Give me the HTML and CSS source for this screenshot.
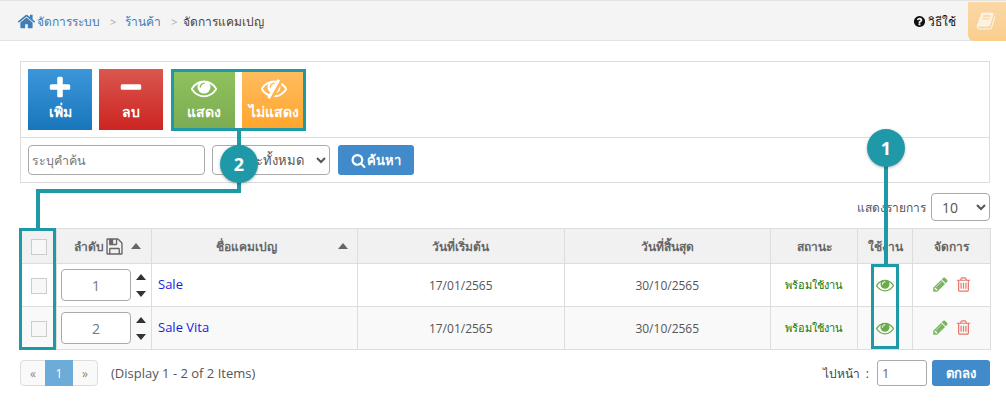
FILE: index.html
```html
<!DOCTYPE html>
<html lang="th">
<head>
    <meta charset="UTF-8">
    <title>จัดการแคมเปญ</title>
    <link rel="stylesheet" href="styles.css">
</head>
<body>
    <svg class="icon-defs" width="0" height="0">
        <symbol id="i-home" viewBox="0 0 1792 1792"><path d="M1472 992v480q0 26-19 45t-45 19h-384v-384h-256v384h-384q-26 0-45-19t-19-45v-480q0-1 .5-3t.5-3l575-474 575 474q1 2 1 6zm223-69l-62 74q-8 9-21 11h-3q-13 0-21-7l-692-577-692 577q-12 8-24 7-13-2-21-11l-62-74q-8-10-7-23.5t11-21.5l719-599q32-26 76-26t76 26l244 204v-195q0-14 9-23t23-9h192q14 0 23 9t9 23v408l219 182q10 8 11 21.5t-7 23.5z"/></symbol>
        <symbol id="i-plus" viewBox="0 0 1792 1792"><path d="M1600 736v192q0 40-28 68t-68 28h-416v416q0 40-28 68t-68 28h-192q-40 0-68-28t-28-68v-416h-416q-40 0-68-28t-28-68v-192q0-40 28-68t68-28h416v-416q0-40 28-68t68-28h192q40 0 68 28t28 68v416h416q40 0 68 28t28 68z"/></symbol>
        <symbol id="i-minus" viewBox="0 0 1792 1792"><path d="M1600 736v192q0 40-28 68t-68 28h-1216q-40 0-68-28t-28-68v-192q0-40 28-68t68-28h1216q40 0 68 28t28 68z"/></symbol>
        <symbol id="i-eye" viewBox="0 0 1792 1792"><path d="M1664 960q-152-236-381-353 61 104 61 225 0 185-131.5 316.5t-316.5 131.5-316.5-131.5-131.5-316.5q0-121 61-225-229 117-381 353 133 205 333.5 326.5t434.5 121.5 434.5-121.5 333.5-326.5zm-720-384q0-20-14-34t-34-14q-125 0-214.5 89.5t-89.5 214.5q0 20 14 34t34 14 34-14 14-34q0-86 61-147t147-61q20 0 34-14t14-34zm848 384q0 34-20 69-140 230-376.5 368.5t-499.5 138.5-499.5-139-376.5-368q-20-35-20-69t20-69q140-229 376.5-368t499.5-139 499.5 139 376.5 368q20 35 20 69z"/></symbol>
        <symbol id="i-eye-slash" viewBox="0 0 1792 1792"><path d="M555 1335l78-141q-87-63-136-159t-49-203q0-121 61-225-229 117-381 353 167 258 427 375zm389-759q0-20-14-34t-34-14q-125 0-214.5 89.5t-89.5 214.5q0 20 14 34t34 14 34-14 14-34q0-86 61-147t147-61q20 0 34-14t14-34zm363-191q0 7-1 9-106 189-316 567t-315 566l-49 89q-10 16-28 16-12 0-134-70-16-10-16-28 0-12 44-87-143-65-263.5-173t-208.5-245q-20-31-20-69t20-69q153-235 380-371t496-136q89 0 180 17l54-97q10-16 28-16 5 0 18 6t31 15.5 33 18.5 31.5 18.5 19.5 11.5q16 10 16 27zm37 447q0 139-79 253.5t-209 164.5l280-502q8 45 8 84zm448 128q0 35-20 69-39 64-109 145-150 172-347.5 267t-419.5 95l74-132q212-18 392.5-137t301.5-307q-115-179-282-294l63-112q95 64 182.5 153t144.5 184q20 34 20 69z"/></symbol>
        <symbol id="i-search" viewBox="0 0 1792 1792"><path d="M1216 832q0-185-131.5-316.5t-316.5-131.5-316.5 131.5-131.5 316.5 131.5 316.5 316.5 131.5 316.5-131.5 131.5-316.5zm512 832q0 52-38 90t-90 38q-54 0-90-38l-343-342q-179 124-399 124-143 0-273.5-55.5t-225-150-150-225-55.5-273.5 55.5-273.5 150-225 225-150 273.5-55.5 273.5 55.5 225 150 150 225 55.5 273.5q0 220-124 399l343 343q37 37 37 90z"/></symbol>
        <symbol id="i-help" viewBox="0 0 1792 1792"><path d="M1024 1376v-192q0-14-9-23t-23-9h-192q-14 0-23 9t-9 23v192q0 14 9 23t23 9h192q14 0 23-9t9-23zm256-672q0-88-55.5-163t-138.5-116-170-41q-243 0-371 213-15 24 8 42l132 100q7 6 19 6 16 0 25-12 53-68 86-92 34-24 86-24 48 0 85.5 26t37.5 59q0 38-20 61t-68 45q-63 28-115.5 86.5t-52.5 125.5v36q0 14 9 23t23 9h192q14 0 23-9t9-23q0-19 21.5-49.5t54.5-49.5q32-18 49-28.5t46-35 44.5-48 28-60.5 12.5-81zm384 192q0 209-103 385.5t-279.5 279.5-385.5 103-385.5-103-279.5-279.5-103-385.5 103-385.5 279.5-279.5 385.5-103 385.5 103 279.5 279.5 103 385.5z"/></symbol>
        <symbol id="i-book" viewBox="0 0 1792 1792"><path d="M1703 478q40 57 18 129l-275 906q-19 64-76.5 107.5t-122.5 43.5h-923q-77 0-148.5-53.5t-99.5-131.5q-24-67-2-127 0-4 3-27t4-37q1-8-3-21.5t-3-19.5q2-11 8-21t16.5-23.5 16.5-23.5q23-38 45-91.5t30-91.5q3-10 .5-30t-.5-28q3-11 17-28t17-23q21-36 42-92t25-90q1-9-2.5-32t.5-28q4-13 22-30.5t22-22.5q19-26 42.5-84.5t27.5-96.5q1-8-3-25.5t-2-26.5q2-8 9-18t18-23 17-21q8-12 16.5-30.5t15-35 16-36 19.5-32 26.5-23.5 36-11.5 47.5 5.5l-1 3q38-9 51-9h761q74 0 114 56t18 130l-274 906q-36 119-71.5 153.5t-128.5 34.5h-869q-27 0-38 15-11 16-1 43 24 70 144 70h923q29 0 56-15.5t35-41.5l300-987q7-22 5-57 38 15 59 43zm-1064 2q-4 13 2 22.5t20 9.5h608q13 0 25.5-9.5t16.5-22.5l21-64q4-13-2-22.5t-20-9.5h-608q-13 0-25.5 9.5t-16.5 22.5zm-83 256q-4 13 2 22.5t20 9.5h608q13 0 25.5-9.5t16.5-22.5l21-64q4-13-2-22.5t-20-9.5h-608q-13 0-25.5 9.5t-16.5 22.5z"/></symbol>
        <symbol id="i-save" viewBox="0 0 1792 1792"><path d="M512 1536h768v-384h-768v384zm896 0h128v-896q0-14-10-38.5t-20-34.5l-281-281q-10-10-34-20t-39-10v416q0 40-28 68t-68 28h-576q-40 0-68-28t-28-68v-416h-128v1280h128v-416q0-40 28-68t68-28h832q40 0 68 28t28 68v416zm-384-928v-320q0-13-9.5-22.5t-22.5-9.5h-192q-13 0-22.5 9.5t-9.5 22.5v320q0 13 9.5 22.5t22.5 9.5h192q13 0 22.5-9.5t9.5-22.5zm640 32v928q0 40-28 68t-68 28h-1344q-40 0-68-28t-28-68v-1344q0-40 28-68t68-28h928q40 0 88 20t76 48l280 280q28 28 48 76t20 88z"/></symbol>
        <symbol id="i-pencil" viewBox="0 0 1792 1792"><path d="M491 1536l91-91-235-235-91 91v107h128v128h107zm523-928q0-22-22-22-10 0-17 7l-542 542q-7 7-7 17 0 22 22 22 10 0 17-7l542-542q7-7 7-17zm-54-192l416 416-832 832h-416v-416zm683 96q0 53-37 90l-166 166-416-416 166-165q36-38 90-38 53 0 91 38l235 234q37 39 37 91z"/></symbol>
        <symbol id="i-trash" viewBox="0 0 1792 1792"><path d="M704 736v576q0 14-9 23t-23 9h-64q-14 0-23-9t-9-23v-576q0-14 9-23t23-9h64q14 0 23 9t9 23zm256 0v576q0 14-9 23t-23 9h-64q-14 0-23-9t-9-23v-576q0-14 9-23t23-9h64q14 0 23 9t9 23zm256 0v576q0 14-9 23t-23 9h-64q-14 0-23-9t-9-23v-576q0-14 9-23t23-9h64q14 0 23 9t9 23zm128 724v-948h-896v948q0 22 7 40.5t14.5 27 10.5 8.5h832q3 0 10.5-8.5t14.5-27 7-40.5zm-672-1076h448l-48-117q-7-9-17-11h-317q-10 2-17 11zm928 32v64q0 14-9 23t-23 9h-96v948q0 83-47 143.5t-113 60.5h-832q-66 0-113-58.5t-47-141.5v-952h-96q-14 0-23-9t-9-23v-64q0-14 9-23t23-9h309l70-167q15-37 54-63t79-26h320q40 0 79 26t54 63l70 167h309q14 0 23 9t9 23z"/></symbol>
    </svg>

    <header class="topbar">
        <nav class="crumbs">
            <svg class="home-icon"><use href="#i-home"/></svg>
            <a href="#">จัดการระบบ</a>
            <span class="crumb-sep">&gt;</span>
            <a href="#">ร้านค้า</a>
            <span class="crumb-sep crumb-sep-last">&gt;</span>
            <span class="crumb-now">จัดการแคมเปญ</span>
        </nav>
        <a class="help" href="#"><svg class="help-icon"><use href="#i-help"/></svg>วิธีใช้</a>
        <div class="book-tab"><svg class="book-icon"><use href="#i-book"/></svg></div>
    </header>

    <main class="content">
        <section class="panel">
            <div class="actions">
                <button class="tile tile-add" type="button"><svg class="tile-icon"><use href="#i-plus"/></svg>เพิ่ม</button>
                <button class="tile tile-del" type="button"><svg class="tile-icon"><use href="#i-minus"/></svg>ลบ</button>
                <button class="tile tile-show" type="button"><svg class="tile-icon"><use href="#i-eye"/></svg>แสดง</button>
                <button class="tile tile-hide" type="button"><svg class="tile-icon"><use href="#i-eye-slash"/></svg>ไม่แสดง</button>
            </div>
            <form class="search">
                <input class="search-input" type="text" placeholder="ระบุคำค้น">
                <select class="search-select"><option>สถานะทั้งหมด</option></select>
                <button class="btn-blue btn-search" type="button"><svg class="search-icon"><use href="#i-search"/></svg>ค้นหา</button>
            </form>
        </section>

        <div class="page-size">
            <span>แสดงรายการ</span>
            <select class="size-select"><option>10</option></select>
        </div>

        <table class="grid">
            <colgroup>
                <col class="c-check"><col class="c-order"><col class="c-name"><col class="c-date"><col class="c-date"><col class="c-status"><col class="c-use"><col class="c-manage">
            </colgroup>
            <thead>
                <tr>
                    <th><span class="check"></span></th>
                    <th><div class="th-order">ลำดับ <svg class="save-icon"><use href="#i-save"/></svg><i class="caret-up"></i></div></th>
                    <th class="th-name">ชื่อแคมเปญ<i class="caret-up"></i></th>
                    <th>วันที่เริ่มต้น</th>
                    <th>วันที่สิ้นสุด</th>
                    <th>สถานะ</th>
                    <th>ใช้งาน</th>
                    <th>จัดการ</th>
                </tr>
            </thead>
            <tbody>
                <tr>
                    <td><span class="check"></span></td>
                    <td><div class="order-cell"><input class="order-input" type="text" value="1"><div class="order-arrows"><i class="arrow-up"></i><i class="arrow-down"></i></div></div></td>
                    <td class="name"><a href="#">Sale</a></td>
                    <td>17/01/2565</td>
                    <td>30/10/2565</td>
                    <td class="ready">พร้อมใช้งาน</td>
                    <td><svg class="eye-icon"><use href="#i-eye"/></svg></td>
                    <td><div class="manage"><svg class="pencil-icon"><use href="#i-pencil"/></svg><svg class="trash-icon"><use href="#i-trash"/></svg></div></td>
                </tr>
                <tr>
                    <td><span class="check"></span></td>
                    <td><div class="order-cell"><input class="order-input" type="text" value="2"><div class="order-arrows"><i class="arrow-up"></i><i class="arrow-down"></i></div></div></td>
                    <td class="name"><a href="#">Sale Vita</a></td>
                    <td>17/01/2565</td>
                    <td>30/10/2565</td>
                    <td class="ready">พร้อมใช้งาน</td>
                    <td><svg class="eye-icon"><use href="#i-eye"/></svg></td>
                    <td><div class="manage"><svg class="pencil-icon"><use href="#i-pencil"/></svg><svg class="trash-icon"><use href="#i-trash"/></svg></div></td>
                </tr>
            </tbody>
        </table>

        <div class="pager-row">
            <div class="pager">
                <a class="pg pg-prev" href="#">«</a>
                <a class="pg pg-now" href="#">1</a>
                <a class="pg pg-next" href="#">»</a>
            </div>
            <span class="pager-info">(Display 1 - 2 of 2 Items)</span>
            <div class="goto">
                <span>ไปหน้า&nbsp; :</span>
                <input class="goto-input" type="text" value="1">
                <button class="btn-blue btn-go" type="button">ตกลง</button>
            </div>
        </div>
    </main>

    <!-- teal annotations drawn over the page -->
    <div class="mark box-tiles"></div>
    <div class="mark box-check"></div>
    <div class="mark box-eye"></div>
    <div class="mark line-a"></div>
    <div class="mark line-b"></div>
    <div class="mark line-c"></div>
    <div class="mark line-d"></div>
    <div class="bubble bubble-1">1</div>
    <div class="bubble bubble-2">2</div>
</body>
</html>
```

FILE: styles.css
```css
* {
    box-sizing: border-box;
}

html, body {
    height: 404px;
    overflow: hidden;
}

body {
    position: relative;
    margin: 0;
    font-family: "Open Sans", "Noto Sans", sans-serif;
    font-size: 12px;
    color: #555;
    background-color: #fff;
}

svg {
    fill: currentColor;
}

.icon-defs {
    position: absolute;
}

/* top bar */
.topbar {
    display: flex;
    align-items: center;
    height: 41px;
    background-color: #f4f4f4;
    border-top: 1px solid #e3e3e3;
    border-bottom: 1px solid #e3e3e3;
}

.crumbs {
    display: flex;
    align-items: center;
    padding-top: 1px;
    padding-left: 17px;
}

.crumbs a {
    color: #3f7fb5;
    text-decoration: none;
}

.home-icon {
    width: 19px;
    height: 19px;
    margin-right: 1px;
    color: #3f7fb5;
}

.crumb-sep {
    margin: 0 9px 0 10px;
    color: #aaa;
    font-size: 11px;
}

.crumb-sep-last {
    margin-right: 5px;
}

.crumb-now {
    color: #444;
}

.help {
    display: flex;
    align-items: center;
    margin-left: auto;
    margin-right: 12px;
    padding-top: 1px;
    color: #111;
    text-decoration: none;
}

.help-icon {
    width: 13px;
    height: 13px;
    margin-right: 2px;
}

.book-tab {
    display: flex;
    align-items: center;
    justify-content: center;
    width: 38px;
    height: 39px;
    padding-right: 2px;
    color: #fdf1e0;
    background-image: linear-gradient(#fbd8a6, #fbcd8d);
    border-bottom-left-radius: 6px;
    margin-bottom: -1px;
}

.book-icon {
    width: 20px;
    height: 20px;
}

.content {
    padding: 20px 16px 0 20px;
}

/* action panel */
.panel {
    height: 122px;
    border: 1px solid #ddd;
}

.actions {
    display: flex;
    height: 76px;
    padding: 7px;
    border-bottom: 1px solid #ddd;
}

.tile {
    display: flex;
    flex-direction: column;
    align-items: center;
    width: 64px;
    height: 61px;
    margin-right: 7px;
    padding: 6px 0 0;
    border: 0;
    font-family: inherit;
    font-size: 14px;
    font-weight: 700;
    color: #fff;
    white-space: nowrap;
}

.tile-icon {
    width: 26px;
    height: 26px;
    margin-bottom: 0;
}

.tile-add {
    background-image: linear-gradient(#3b97d8, #1a76bb);
}

.tile-del {
    background-image: linear-gradient(#d9574f, #cd2421);
    margin-right: 9px;
}

.tile-show {
    width: 63px;
    background-image: linear-gradient(#90c35d, #7bab53);
}

.tile-hide {
    background-image: linear-gradient(#ffbd62, #ffa52c);
}

.search {
    display: flex;
    align-items: center;
    padding: 7px;
}

.search-input {
    width: 177px;
    height: 30px;
    margin-right: 7px;
    padding: 0 3px;
    border: 1px solid #aaa;
    border-radius: 4px;
    font-family: inherit;
    font-size: 12.5px;
}

.search-input::placeholder {
    color: #777;
}

.search-select {
    width: 118px;
    height: 30px;
    margin-right: 8px;
    padding-left: 7px;
    border: 1px solid #aaa;
    border-radius: 4px;
    background-color: #fff;
    font-family: inherit;
    font-size: 13px;
    color: #555;
}

.btn-blue {
    height: 30px;
    border: 0;
    border-radius: 3px;
    background-color: #428bca;
    color: #fff;
    font-family: inherit;
    font-size: 13px;
    font-weight: 700;
}

.btn-search {
    display: flex;
    align-items: center;
    justify-content: center;
    width: 76px;
}

.search-icon {
    width: 15px;
    height: 15px;
    margin-right: 1px;
}

/* page size */
.page-size {
    display: flex;
    align-items: center;
    justify-content: flex-end;
    height: 28px;
    margin-top: 10px;
}

.size-select {
    width: 59px;
    height: 28px;
    margin-left: 5px;
    padding-left: 6px;
    border: 1px solid #aaa;
    border-radius: 4px;
    background-color: #fff;
    font-family: inherit;
    font-size: 14px;
    color: #555;
}

/* table */
.grid {
    width: 970px;
    margin-top: 7px;
    border-collapse: collapse;
    table-layout: fixed;
}

.c-check { width: 36px; }
.c-order { width: 95px; }
.c-name { width: 206px; }
.c-date { width: 206.5px; }
.c-status { width: 87px; }
.c-use { width: 55px; }
.c-manage { width: 78px; }

.grid th,
.grid td {
    padding: 0;
    border: 1px solid #ddd;
    text-align: center;
}

.grid th {
    height: 35px;
    background-color: #f1f1f1;
    font-weight: 700;
    color: #666;
}

.grid td {
    height: 43px;
}

.grid tbody tr:nth-child(even) td {
    background-color: #f9f9f9;
}

.check {
    display: inline-block;
    width: 16px;
    height: 16px;
    vertical-align: middle;
    background-color: #f7f7f7;
    border: 1px solid #ccc;
}

.th-order {
    display: flex;
    align-items: center;
    justify-content: center;
    padding-left: 6px;
}

.save-icon {
    width: 19px;
    height: 19px;
    margin-left: 1px;
    margin-right: 7px;
}

.caret-up {
    display: inline-block;
    width: 0;
    height: 0;
    border-left: 5.5px solid transparent;
    border-right: 5.5px solid transparent;
    border-bottom: 6px solid #666;
}

.grid th.th-name {
    position: relative;
    padding-right: 17px;
}

.th-name .caret-up {
    position: absolute;
    right: 9px;
    top: 14px;
}

.order-cell {
    display: flex;
    align-items: center;
    padding-left: 4px;
}

.order-input {
    width: 70px;
    height: 32px;
    border: 1px solid #aaa;
    border-radius: 4px;
    background-color: #fff;
    text-align: center;
    font-family: inherit;
    font-size: 14px;
    color: #777;
}

.order-arrows {
    display: flex;
    flex-direction: column;
    gap: 11px;
    margin-left: 5px;
}

.arrow-up,
.arrow-down {
    width: 0;
    height: 0;
    border-left: 5.5px solid transparent;
    border-right: 5.5px solid transparent;
}

.arrow-up {
    border-bottom: 6px solid #333;
}

.arrow-down {
    border-top: 6px solid #333;
}

.grid td.name {
    padding-left: 6px;
    padding-bottom: 3px;
    text-align: left;
    font-size: 13px;
}

.name a {
    color: #1a1ae6;
    text-decoration: none;
}

.grid td.ready {
    font-size: 11px;
    color: #0a7a0a;
}

.eye-icon {
    display: block;
    width: 18px;
    height: 18px;
    margin: -1px auto 0;
    color: #6cab4a;
}

.manage {
    display: flex;
    align-items: center;
    justify-content: center;
    gap: 6px;
    margin-top: -2px;
}

.pencil-icon {
    width: 17px;
    height: 17px;
    color: #7cb562;
}

.trash-icon {
    width: 17px;
    height: 17px;
    color: #e8776b;
}

/* footer row */
.pager-row {
    display: flex;
    align-items: center;
    height: 26px;
    margin-top: 10px;
}

.pager {
    display: flex;
    height: 26px;
    border: 1px solid #ddd;
    border-radius: 4px;
    background-color: #f9f9f9;
}

.pg {
    display: flex;
    align-items: center;
    justify-content: center;
    color: #888;
    text-decoration: none;
}

.pg-prev {
    width: 24px;
}

.pg-now {
    width: 28px;
    margin: -1px 0;
    background-color: #6dacd8;
    color: #fff;
}

.pg-next {
    width: 24px;
}

.pager-info {
    margin-left: 13px;
    font-size: 13px;
}

.goto {
    display: flex;
    align-items: center;
    margin-left: auto;
    color: #444;
}

.goto-input {
    width: 50px;
    height: 26px;
    margin: 0 5px 0 8px;
    padding: 0 4px;
    border: 1px solid #aaa;
    border-radius: 3px;
    font-family: inherit;
    font-size: 13px;
    color: #666;
}

.btn-go {
    width: 58px;
    height: 26px;
}

/* annotations */
.mark {
    position: absolute;
}

.box-tiles,
.box-check,
.box-eye {
    border: 3px solid #1f99a8;
}

.box-tiles {
    left: 171px;
    top: 69px;
    width: 135px;
    height: 62px;
}

.box-check {
    left: 19px;
    top: 228px;
    width: 37px;
    height: 122px;
}

.box-eye {
    left: 871px;
    top: 264px;
    width: 28px;
    height: 85px;
}

.line-a,
.line-b,
.line-c,
.line-d {
    background-color: #1f99a8;
}

.line-a {
    left: 884px;
    top: 150px;
    width: 4px;
    height: 115px;
}

.line-b {
    left: 237px;
    top: 130px;
    width: 4px;
    height: 63px;
}

.line-c {
    left: 36px;
    top: 189px;
    width: 205px;
    height: 4px;
}

.line-d {
    left: 36px;
    top: 189px;
    width: 4px;
    height: 40px;
}

.bubble {
    position: absolute;
    display: flex;
    align-items: center;
    justify-content: center;
    width: 38px;
    height: 38px;
    border-radius: 50%;
    background-color: #1f99a8;
    box-shadow: 0 1px 3px rgba(0, 0, 0, 0.3);
    color: #fff;
    font-size: 18px;
    font-weight: 700;
}

.bubble-1 {
    left: 867px;
    top: 129px;
}

.bubble-2 {
    left: 220px;
    top: 145px;
}
```
